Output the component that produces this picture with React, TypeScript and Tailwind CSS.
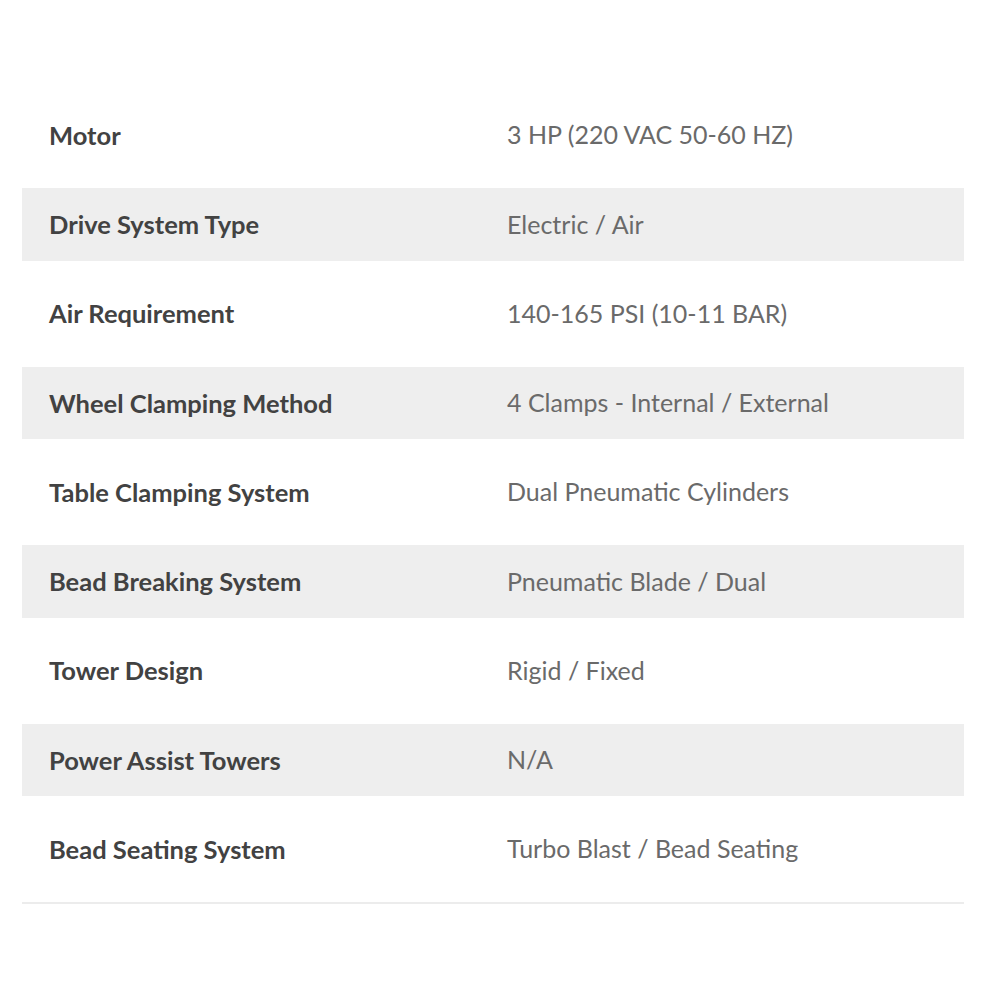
import React from "react";

const rows: [string, string][] = [
  ["Motor", "3 HP (220 VAC 50-60 HZ)"],
  ["Drive System Type", "Electric / Air"],
  ["Air Requirement", "140-165 PSI (10-11 BAR)"],
  ["Wheel Clamping Method", "4 Clamps - Internal / External"],
  ["Table Clamping System", "Dual Pneumatic Cylinders"],
  ["Bead Breaking System", "Pneumatic Blade / Dual"],
  ["Tower Design", "Rigid / Fixed"],
  ["Power Assist Towers", "N/A"],
  ["Bead Seating System", "Turbo Blast / Bead Seating"],
];

export default function App() {
  return (
    <div className="w-[1000px] h-[1000px] bg-white pt-[82px]" style={{ fontFamily: "Lato, 'Open Sans', sans-serif" }}>
      <div className="ml-[22px] w-[942px] border-b-2 border-[#ececec]">
        {rows.map(([k, v], i) => (
          <div
            key={k}
            className={
              i % 2 === 1
                ? "grid grid-cols-[458px_1fr] items-center h-[72.5px] bg-[#eeeeee]"
                : "grid grid-cols-[458px_1fr] items-center h-[106px] bg-white"
            }
          >
            <div className="pl-[27px] text-[25.5px] font-bold text-[#424242]">{k}</div>
            <div className="pl-[27px] text-[25px] text-[#6a6a6a]">{v}</div>
          </div>
        ))}
      </div>
    </div>
  );
}
